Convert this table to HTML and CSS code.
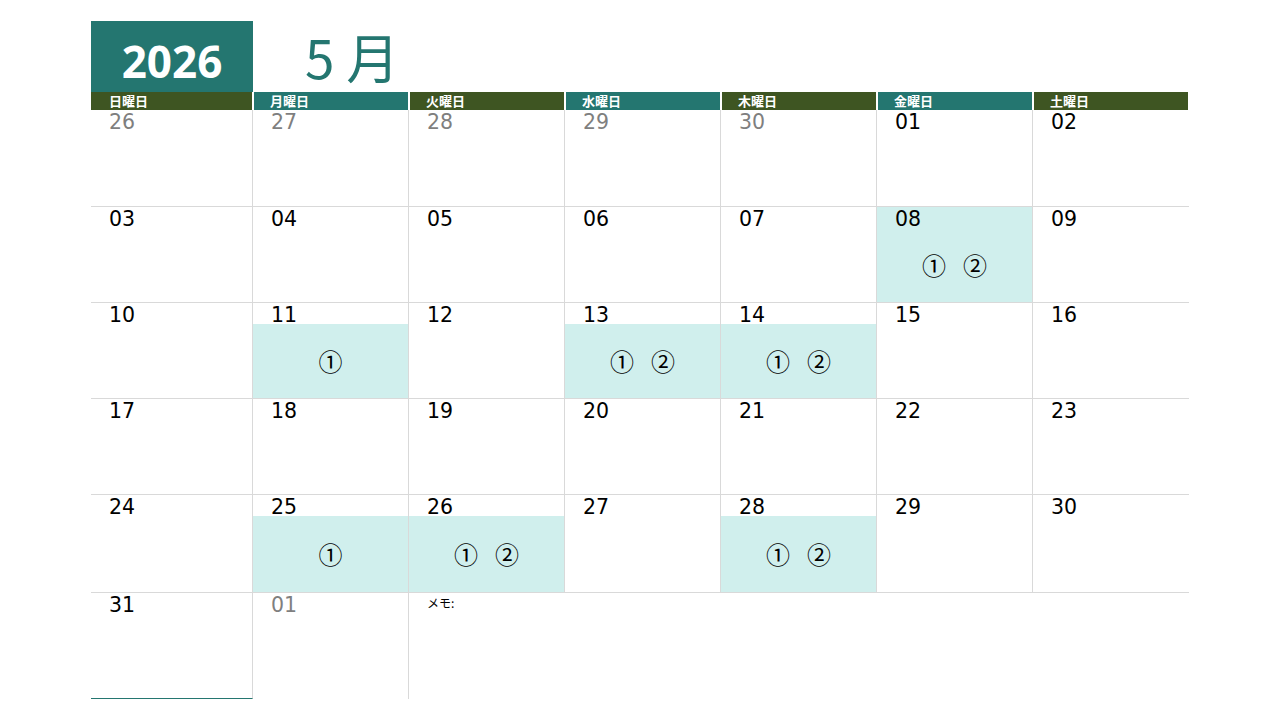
FILE: index.html
```html
<!DOCTYPE html>
<html lang="ja">
<head>
<meta charset="utf-8">
<title>2026 5月</title>
<link rel="stylesheet" href="styles.css">
</head>
<body>
<div class="page">
  <div class="title">
    <div class="year">2026</div>
    <div class="month">5 月</div>
  </div>
  <div class="cal">
    <div class="dh olive first">日曜日</div>
    <div class="dh teal">月曜日</div>
    <div class="dh olive">火曜日</div>
    <div class="dh teal">水曜日</div>
    <div class="dh olive">木曜日</div>
    <div class="dh teal">金曜日</div>
    <div class="dh olive">土曜日</div>

    <div class="cell"><div class="num grey">26</div><div class="ev"></div></div>
    <div class="cell"><div class="num grey">27</div><div class="ev"></div></div>
    <div class="cell"><div class="num grey">28</div><div class="ev"></div></div>
    <div class="cell"><div class="num grey">29</div><div class="ev"></div></div>
    <div class="cell"><div class="num grey">30</div><div class="ev"></div></div>
    <div class="cell"><div class="num">01</div><div class="ev"></div></div>
    <div class="cell last"><div class="num">02</div><div class="ev"></div></div>

    <div class="cell"><div class="num">03</div><div class="ev"></div></div>
    <div class="cell"><div class="num">04</div><div class="ev"></div></div>
    <div class="cell"><div class="num">05</div><div class="ev"></div></div>
    <div class="cell"><div class="num">06</div><div class="ev"></div></div>
    <div class="cell"><div class="num">07</div><div class="ev"></div></div>
    <div class="cell hl"><div class="num">08</div><div class="ev"><span>①</span><span>②</span></div></div>
    <div class="cell last"><div class="num">09</div><div class="ev"></div></div>

    <div class="cell"><div class="num">10</div><div class="ev"></div></div>
    <div class="cell"><div class="num">11</div><div class="ev hl"><span>①</span></div></div>
    <div class="cell"><div class="num">12</div><div class="ev"></div></div>
    <div class="cell"><div class="num">13</div><div class="ev hl"><span>①</span><span>②</span></div></div>
    <div class="cell"><div class="num">14</div><div class="ev hl"><span>①</span><span>②</span></div></div>
    <div class="cell"><div class="num">15</div><div class="ev"></div></div>
    <div class="cell last"><div class="num">16</div><div class="ev"></div></div>

    <div class="cell"><div class="num">17</div><div class="ev"></div></div>
    <div class="cell"><div class="num">18</div><div class="ev"></div></div>
    <div class="cell"><div class="num">19</div><div class="ev"></div></div>
    <div class="cell"><div class="num">20</div><div class="ev"></div></div>
    <div class="cell"><div class="num">21</div><div class="ev"></div></div>
    <div class="cell"><div class="num">22</div><div class="ev"></div></div>
    <div class="cell last"><div class="num">23</div><div class="ev"></div></div>

    <div class="cell"><div class="num">24</div><div class="ev"></div></div>
    <div class="cell"><div class="num">25</div><div class="ev hl"><span>①</span></div></div>
    <div class="cell"><div class="num">26</div><div class="ev hl"><span>①</span><span>②</span></div></div>
    <div class="cell"><div class="num">27</div><div class="ev"></div></div>
    <div class="cell"><div class="num">28</div><div class="ev hl"><span>①</span><span>②</span></div></div>
    <div class="cell"><div class="num">29</div><div class="ev"></div></div>
    <div class="cell last"><div class="num">30</div><div class="ev"></div></div>

    <div class="cell endrow first-end"><div class="num">31</div><div class="ev"></div></div>
    <div class="cell endrow"><div class="num grey">01</div><div class="ev"></div></div>
    <div class="memo">メモ:</div>
  </div>
</div>
</body>
</html>
```

FILE: styles.css
```css
html, body {
  margin: 0;
  padding: 0;
  background: #ffffff;
}

.page {
  padding: 21px 0 0 91px;
}

.title {
  display: flex;
  height: 71px;
}

.year {
  width: 162px;
  box-sizing: border-box;
  background: #247670;
  color: #ffffff;
  font-family: "Open Sans", "Noto Sans", sans-serif;
  font-weight: 700;
  font-size: 44px;
  line-height: 44px;
  display: flex;
  align-items: flex-end;
  justify-content: center;
  padding-bottom: 9px;
}

.month {
  margin-left: 52px;
  align-self: flex-end;
  color: #247670;
  font-family: "Noto Sans CJK JP", "Noto Sans", sans-serif;
  font-size: 53px;
  line-height: 53px;
  padding-bottom: 9px;
}

.cal {
  display: grid;
  grid-template-columns: 162px repeat(6, 156px);
  grid-template-rows: 18px 97px 96px 96px 96px 98px 106px;
  width: 1098px;
}

.dh {
  color: #ffffff;
  font-family: "Noto Sans CJK JP", sans-serif;
  font-weight: 700;
  font-size: 13px;
  line-height: 18px;
  height: 18px;
  margin: 0 1px 0 1px;
  padding-left: 16px;
  white-space: nowrap;
}

.dh.first {
  margin-left: 0;
  padding-left: 18px;
}

.olive { background: #3e5522; }
.teal { background: #247670; }

.cell {
  display: flex;
  flex-direction: column;
  box-sizing: border-box;
  border-right: 1px solid #d9d9d9;
  border-bottom: 1px solid #d9d9d9;
}

.cell.last {
  border-right: none;
}

.cell.endrow {
  border-bottom: none;
}

.cell.first-end {
  border-bottom: 1px solid #247670;
}

.num {
  height: 21px;
  box-sizing: border-box;
  padding: 2px 0 0 18px;
  font-family: "DejaVu Sans", Verdana, sans-serif;
  font-size: 20.5px;
  line-height: 20px;
  color: #000000;
}

.num.grey {
  color: #7f7f7f;
}

.ev {
  flex: 1;
  display: flex;
  align-items: center;
  justify-content: center;
  gap: 17px;
  font-family: "Noto Sans CJK JP", sans-serif;
  font-size: 24px;
  line-height: 24px;
  color: #000000;
}

.hl {
  background: #d0efed;
}

.memo {
  grid-column: span 5;
  padding: 4px 0 0 18px;
  font-family: "Noto Sans CJK JP", sans-serif;
  font-size: 12px;
  line-height: 12px;
  color: #000000;
}
```
